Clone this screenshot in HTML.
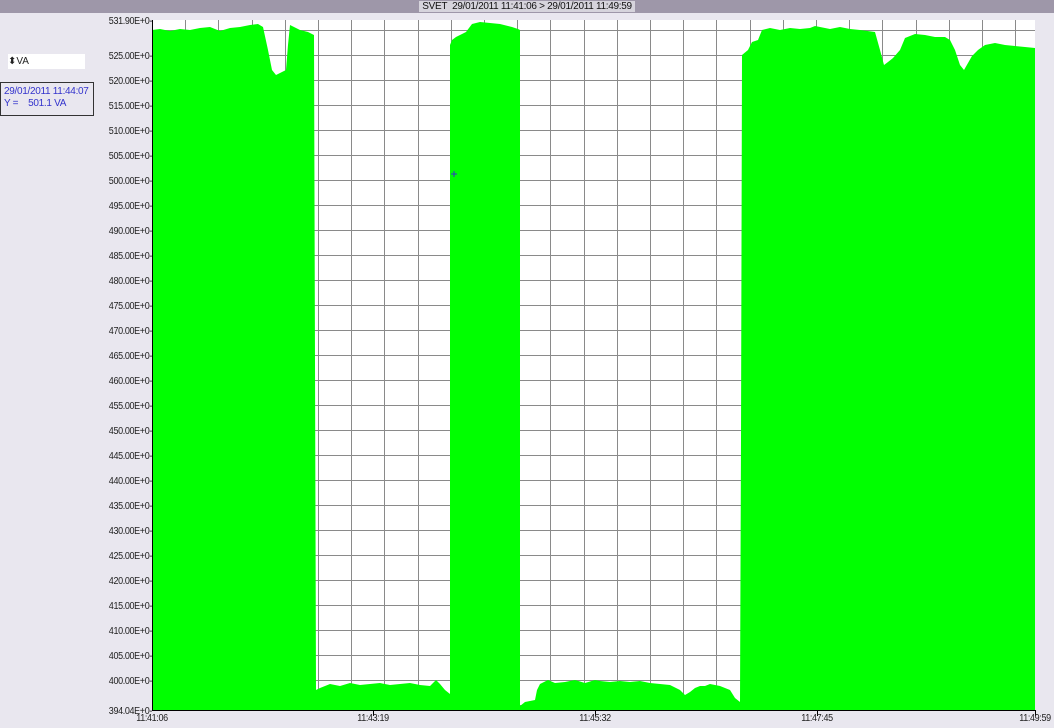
<!DOCTYPE html>
<html><head><style>
body{margin:0;width:1054px;height:728px;background:#e9e7ef;overflow:hidden;font-family:"Liberation Sans",sans-serif;position:relative}
.bar{position:absolute;left:0;top:0;width:1054px;height:13px;background:#9e97a9;font-size:10px;line-height:13px;text-align:center;color:#111;letter-spacing:-0.3px}
.lbl{position:absolute;font-size:10px;color:#222;letter-spacing:-0.4px;transform:scaleX(0.9)}
</style></head><body>
<div class="bar"><span style="background:#d6d4dc;padding:0 3px">SVET&nbsp; 29/01/2011 11:41:06 &gt; 29/01/2011 11:49:59</span></div>
<div style="position:absolute;left:8px;top:54px;width:77px;height:15px;background:#fff;font-size:10px;line-height:15px;color:#222">&#x2B0D;VA</div>
<div style="position:absolute;left:0;top:82px;width:94px;height:34px;border:1px solid #333;font-size:10px;line-height:12px;color:#3333cc;padding:3px 0 0 3px;box-sizing:border-box;letter-spacing:-0.3px">29/01/2011 11:44:07<br>Y =&nbsp;&nbsp;&nbsp; 501.1 VA</div>
<svg width="1054" height="728" style="position:absolute;left:0;top:0">
<rect x="152" y="20" width="883" height="690" fill="#fff"/>
<g id="grid" stroke="#8a8a8a" stroke-width="1"></g>
<polygon fill="#00ff00" points="152,710 152,30 160,29 170,31 180,29 190,30 200,28 210,27 220,31 230,28 240,27 250,25 258,24 263,27 268,50 272,70 276,75 282,72 286,70 288,45 290,25 294,27 300,30 308,32 314,35 316,690 320,688 330,684 340,686 350,683 360,685 370,684 380,683 390,685 400,684 410,683 420,685 430,686 436,680 440,684 445,690 450,694 450,45 452,40 456,37 460,35 466,32 472,24 480,22 490,23 500,24 512,27 518,29 520,30 520,706 525,702 535,700 537,690 540,684 548,680 555,683 565,682 575,680 585,683 595,680 600,681 610,682 620,681 630,682 640,681 650,683 660,684 670,685 680,690 685,695 690,692 695,688 700,686 705,686 710,684 720,686 730,690 735,698 740,702 741,440 742,55 748,50 752,42 758,40 762,30 770,28 780,30 790,28 800,29 810,28 815,26 820,27 830,29 840,27 850,29 860,30 875,32 880,50 884,65 888,62 893,58 900,50 905,38 915,34 925,35 935,37 945,37 950,40 955,50 960,65 964,70 968,63 972,56 978,50 985,45 995,43 1005,45 1015,46 1025,47 1035,48 1035,710"/>
<g stroke="#000" stroke-width="1"><path d="M152.5 20V711M152 710.5H1035M373.5 710V716M595.5 710V716M817.5 710V716M1035.5 710V716"/></g>
<path d="M451 174h6M454 171v6" stroke="#3333cc" stroke-width="1"/>
</svg>
<script>
var s='',g=document.getElementById('grid');
for(var k=1;k<=26;k++){var x=Math.round(152+k*33.2)+.5;s+='M'+x+' 20V710';}
s+='M152 30.5H1035';
for(var y=55;y<=705;y+=25){s+='M152 '+(y+.5)+'H1035';}
var p=document.createElementNS('http://www.w3.org/2000/svg','path');p.setAttribute('d',s);g.appendChild(p);
var h='';
var vals=[[531.90,20]];for(var v=525;v>=400;v-=5){vals.push([v,80+(520-v)*5]);}vals.push([394.04,710]);
vals.forEach(function(a){h+='<div class="lbl" style="right:'+(1054-152)+'px;top:'+(a[1]-4)+'px;transform-origin:right">'+a[0].toFixed(2)+'E+0-</div>';});
[['11:41:06',152],['11:43:19',373],['11:45:32',595],['11:47:45',817],['11:49:59',1035]].forEach(function(a){h+='<div class="lbl" style="left:'+(a[1]-20)+'px;top:713px;width:40px;text-align:center">'+a[0]+'</div>';});
document.body.insertAdjacentHTML('beforeend',h);
</script>
</body></html>
